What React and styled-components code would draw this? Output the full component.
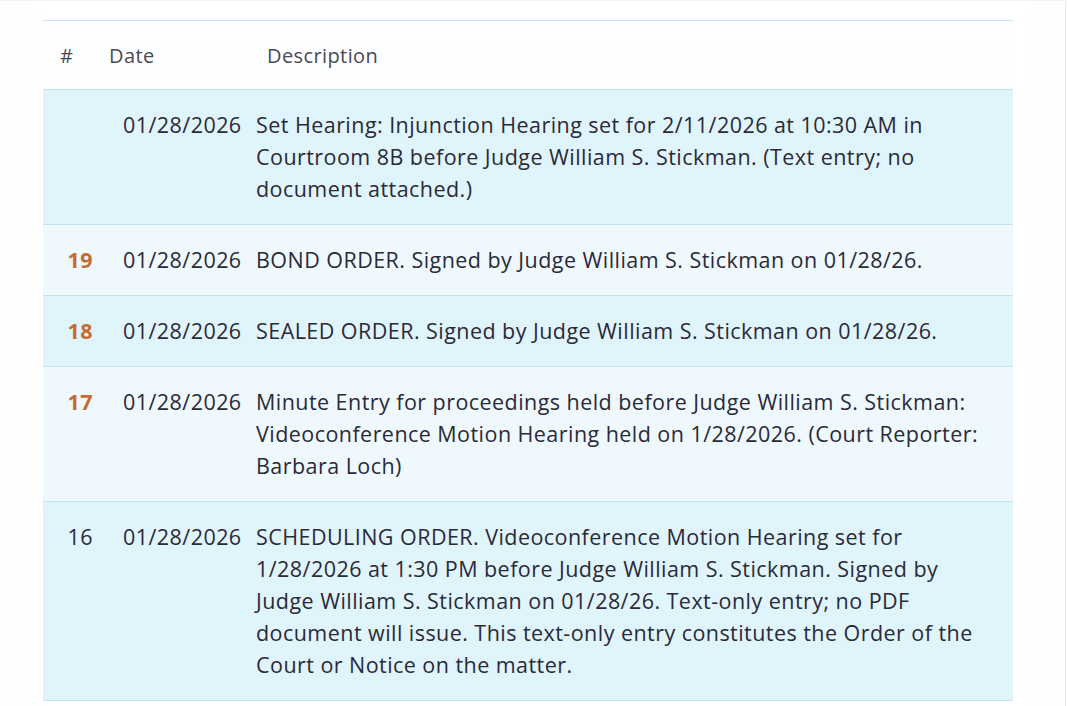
import React from 'react';
import styled, { createGlobalStyle } from 'styled-components';

const GlobalStyle = createGlobalStyle`
  html, body {
    margin: 0;
    padding: 0;
    background: #ffffff;
  }
  body {
    font-family: "Open Sans", "Noto Sans", "Liberation Sans", sans-serif;
    color: #2b2a38;
  }
`

const Page = styled.div`
  width: 1066px;
  height: 706px;
  box-sizing: border-box;
  padding: 19px 53px 0 43px;
  border-top: 1px solid #f1f3f4;
  border-right: 1px solid #e9ecee;
  background: linear-gradient(90deg, #fbfdfe 0%, #ffffff 4%, #ffffff 96%, #fbfdfe 100%);
  overflow: hidden;
`

const Table = styled.table`
  width: 970px;
  border-collapse: collapse;
  table-layout: fixed;
  border-top: 1px solid #c3e6f4;
`

const HeadRow = styled.tr`
  height: 69px;
  background: #fdfeff;
  border-bottom: 1px solid #bfe5f4;
`

const HeadCell = styled.th`
  font-weight: 400;
  font-size: 20px;
  letter-spacing: 0.4px;
  color: #4a4a55;
  text-align: left;
  padding: 0 0 0 ${p => p.$indent}px;
  vertical-align: middle;
`

const Row = styled.tr`
  background: ${p => (p.$tint ? '#e0f4fc' : '#eef8fd')};
  border-bottom: 1px solid #bfe5f4;
`

const BodyCell = styled.td`
  vertical-align: top;
  font-size: 21.5px;
  letter-spacing: 0.45px;
  line-height: 32px;
`

const NumCell = styled(BodyCell)`
  padding: 19px 7px 19px 0;
  text-align: right;
  font-weight: ${p => (p.$linked ? 700 : 400)};
  color: ${p => (p.$linked ? '#c46c33' : '#2b2a38')};
`

const DateCell = styled(BodyCell)`
  padding: 19px 0 19px 23px;
  white-space: nowrap;
`

const DescCell = styled(BodyCell)`
  padding: 19px 20px 19px 6px;
`

const Line = styled.span`
  display: block;
  white-space: nowrap;
`

const entries = [
  {
    num: '',
    date: '01/28/2026',
    tint: true,
    lines: [
      'Set Hearing: Injunction Hearing set for 2/11/2026 at 10:30 AM in',
      'Courtroom 8B before Judge William S. Stickman. (Text entry; no',
      'document attached.)',
    ],
  },
  {
    num: '19',
    linked: true,
    date: '01/28/2026',
    lines: ['BOND ORDER. Signed by Judge William S. Stickman on 01/28/26.'],
  },
  {
    num: '18',
    linked: true,
    tint: true,
    date: '01/28/2026',
    lines: ['SEALED ORDER. Signed by Judge William S. Stickman on 01/28/26.'],
  },
  {
    num: '17',
    linked: true,
    date: '01/28/2026',
    lines: [
      'Minute Entry for proceedings held before Judge William S. Stickman:',
      'Videoconference Motion Hearing held on 1/28/2026. (Court Reporter:',
      'Barbara Loch)',
    ],
  },
  {
    num: '16',
    tint: true,
    date: '01/28/2026',
    lines: [
      'SCHEDULING ORDER. Videoconference Motion Hearing set for',
      '1/28/2026 at 1:30 PM before Judge William S. Stickman. Signed by',
      'Judge William S. Stickman on 01/28/26. Text-only entry; no PDF',
      'document will issue. This text-only entry constitutes the Order of the',
      'Court or Notice on the matter.',
    ],
  },
];

export default function App() {
  return (
    <>
      <GlobalStyle />
      <Page>
        <Table>
          <colgroup>
            <col style={{ width: 57 }} />
            <col style={{ width: 150 }} />
            <col />
          </colgroup>
          <thead>
            <HeadRow>
              <HeadCell $indent={17}>#</HeadCell>
              <HeadCell $indent={9}>Date</HeadCell>
              <HeadCell $indent={17}>Description</HeadCell>
            </HeadRow>
          </thead>
          <tbody>
            {entries.map((e, i) => (
              <Row key={i} $tint={e.tint}>
                <NumCell $linked={e.linked}>{e.num}</NumCell>
                <DateCell>{e.date}</DateCell>
                <DescCell>
                  {e.lines.map((l, j) => (
                    <Line key={j}>{l}</Line>
                  ))}
                </DescCell>
              </Row>
            ))}
          </tbody>
        </Table>
      </Page>
    </>
  );
}
